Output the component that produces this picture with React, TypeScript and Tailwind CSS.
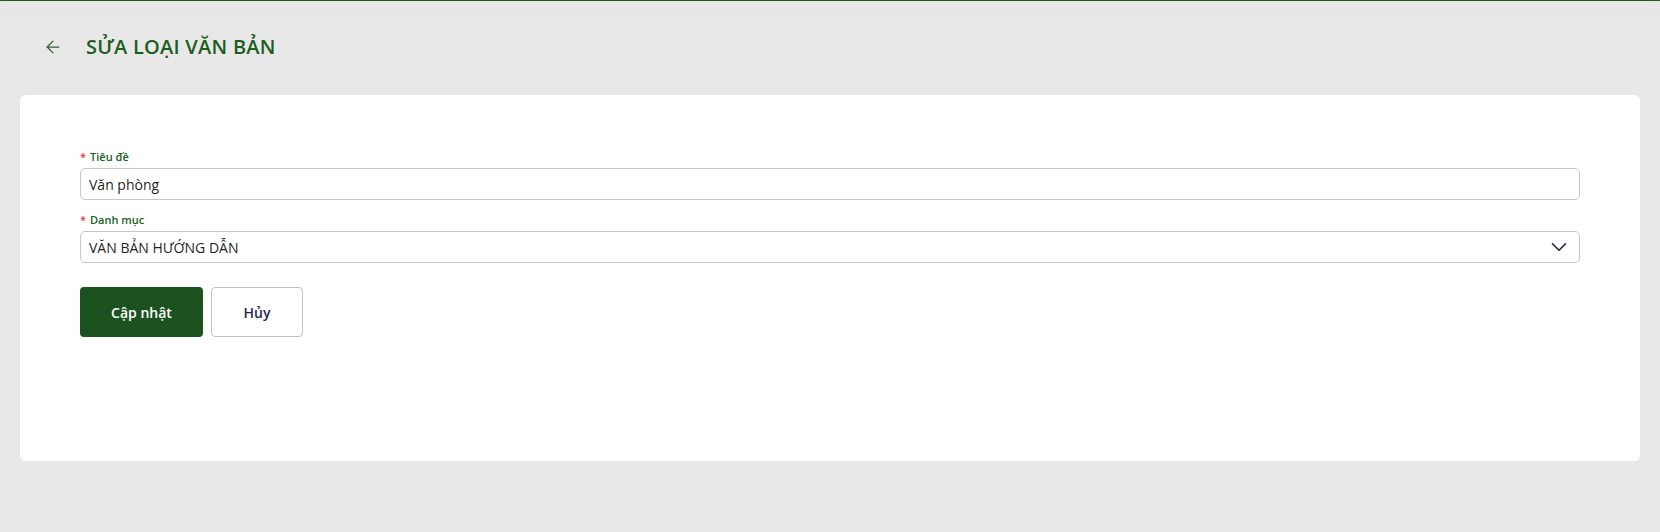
import { ArrowLeft, ChevronDown } from 'lucide-react';

const font = { fontFamily: '"Open Sans", "Noto Sans", sans-serif' };

function Field({ label, children }: { label: string; children: React.ReactNode }) {
  return (
    <div className="flex flex-col">
      <label className="mb-[3px] flex items-center text-[11px] leading-[16px] font-semibold text-[#1b5e20]">
        <span className="mr-[4px] text-[#e53935]">*</span>
        {label}
      </label>
      {children}
    </div>
  );
}

export default function App() {
  return (
    <div className="min-h-[532px] bg-[#e8e8e8]" style={font}>
      <div className="h-px bg-[#1b5e20] shadow-[0_5px_18px_rgba(0,0,0,0.22)]" />
      <div className="flex h-[94px] items-center pb-[2px] pl-[43px]">
        <button className="flex h-[20px] w-[20px] items-center justify-center text-[#2e5e2e]">
          <ArrowLeft size={20} strokeWidth={1.5} />
        </button>
        <h1 className="ml-[23px] text-[20px] font-semibold tracking-[0.25px] text-[#1b5e20]">SỬA LOẠI VĂN BẢN</h1>
      </div>
      <div className="mx-[20px] h-[366px] rounded-md bg-white px-[60px] pt-[54px]">
        <div className="flex flex-col gap-[12px]">
          <Field label="Tiêu đề">
            <input
              className="h-[32px] rounded-[5px] border border-[#c6c6cc] px-[8px] text-[14px] text-[#1f1f1f] outline-none"
              defaultValue="Văn phòng"
              style={font}
            />
          </Field>
          <Field label="Danh mục">
            <div className="flex h-[32px] items-center justify-between rounded-[5px] border border-[#c6c6cc] pr-[7px] pl-[8px] text-[14px] text-[#1f1f1f]">
              <span>VĂN BẢN HƯỚNG DẪN</span>
              <ChevronDown size={26} strokeWidth={1.5} className="text-[#1e2640]" />
            </div>
          </Field>
        </div>
        <div className="mt-[24px] flex gap-[8px]">
          <button className="h-[50px] w-[123px] rounded-[4px] bg-[#1b5220] text-[14px] font-semibold text-white">
            Cập nhật
          </button>
          <button className="h-[50px] w-[92px] rounded-[4px] border border-[#c2c2ca] bg-white text-[14px] font-semibold text-[#1e2a4a]">
            Hủy
          </button>
        </div>
      </div>
    </div>
  );
}
